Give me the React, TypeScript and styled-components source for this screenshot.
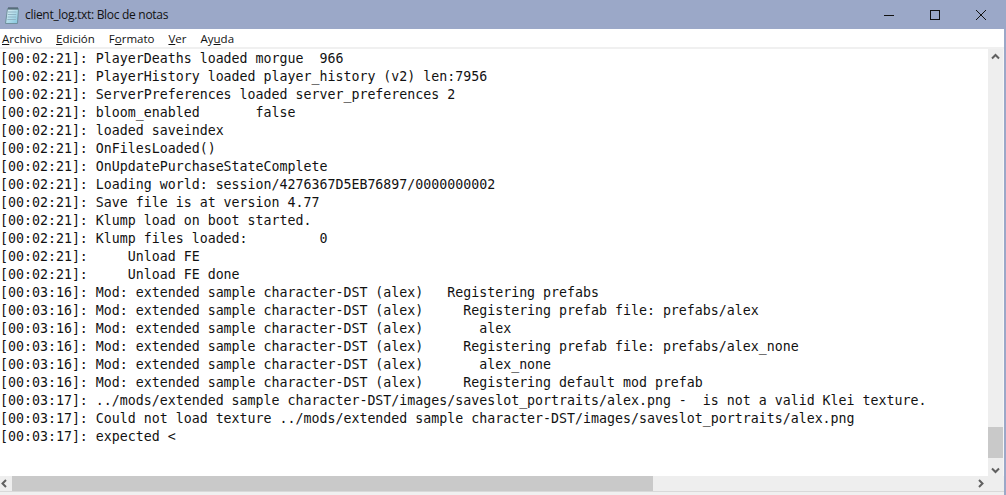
import { createGlobalStyle, styled } from "styled-components";

const Global = createGlobalStyle`
  html,
  body {
    margin: 0;
    padding: 0;
    height: 100%;
    overflow: hidden;
    background: #fff;
  }
`;

const Win = styled.div`
  width: 1006px;
  height: 495px;
  display: flex;
  flex-direction: column;
  background: #fff;
  border-right: 2px solid #9ba8c8;
  box-sizing: border-box;
  font-family: "Open Sans", "Noto Sans", sans-serif;
`;

const TitleBar = styled.div`
  height: 29px;
  flex: none;
  display: flex;
  align-items: center;
  background: #9ba8c8;
  padding-left: 4px;
`;

const TitleText = styled.span`
  margin-left: 5px;
  font-size: 12px;
  letter-spacing: -0.3px;
  color: #111;
  flex: 1;
`;

const WinBtn = styled.div`
  width: 46px;
  height: 29px;
  display: flex;
  align-items: center;
  justify-content: center;
`;

const MenuBar = styled.div`
  height: 18px;
  flex: none;
  display: flex;
  align-items: center;
  gap: 14px;
  padding-left: 2px;
  font-size: 11.5px;
  color: #111;
  border-bottom: 2px solid #f0f0f0;
`;

const Key = styled.span`
  text-decoration: underline;
  text-underline-offset: 1px;
`;

const Body = styled.div`
  flex: 1;
  min-height: 0;
  display: grid;
  grid-template-columns: 1fr 16px;
  grid-template-rows: 1fr 15px;
`;

const Log = styled.pre`
  margin: 0;
  padding-top: 1px;
  overflow: hidden;
  font-family: "DejaVu Sans Mono", "Liberation Mono", monospace;
  font-size: 13.28px;
  line-height: 18px;
  color: #111;
`;

const VBar = styled.div`
  background: #eeeeee;
  border-right: 1px solid #f6f6f6;
  display: flex;
  flex-direction: column;
  align-items: center;
  justify-content: space-between;
  padding: 3px 0 1px;
  position: relative;
`;

const Thumb = styled.div`
  position: absolute;
  left: 0;
  right: 0;
  background: #c9c9c9;
`;

const HBar = styled.div`
  background: #eeeeee;
  display: flex;
  align-items: center;
  justify-content: space-between;
  padding: 0 3px 0 0;
  position: relative;
`;

const HThumb = styled.div`
  position: absolute;
  top: 0;
  bottom: 0;
  left: 12px;
  width: 641px;
  background: #c9c9c9;
`;

const Corner = styled.div`
  background: #eeeeee;
`;

const Bottom = styled.div`
  height: 4px;
  flex: none;
  background: #f0f0f0;
  border-top: 1px solid #d9d9d9;
  box-sizing: border-box;
`;

const lines = `[00:02:21]: PlayerDeaths loaded morgue  966
[00:02:21]: PlayerHistory loaded player_history (v2) len:7956
[00:02:21]: ServerPreferences loaded server_preferences 2
[00:02:21]: bloom_enabled       false
[00:02:21]: loaded saveindex
[00:02:21]: OnFilesLoaded()
[00:02:21]: OnUpdatePurchaseStateComplete
[00:02:21]: Loading world: session/4276367D5EB76897/0000000002
[00:02:21]: Save file is at version 4.77
[00:02:21]: Klump load on boot started.
[00:02:21]: Klump files loaded:         0
[00:02:21]:     Unload FE
[00:02:21]:     Unload FE done
[00:03:16]: Mod: extended sample character-DST (alex)   Registering prefabs
[00:03:16]: Mod: extended sample character-DST (alex)     Registering prefab file: prefabs/alex
[00:03:16]: Mod: extended sample character-DST (alex)       alex
[00:03:16]: Mod: extended sample character-DST (alex)     Registering prefab file: prefabs/alex_none
[00:03:16]: Mod: extended sample character-DST (alex)       alex_none
[00:03:16]: Mod: extended sample character-DST (alex)     Registering default mod prefab
[00:03:17]: ../mods/extended sample character-DST/images/saveslot_portraits/alex.png -  is not a valid Klei texture.
[00:03:17]: Could not load texture ../mods/extended sample character-DST/images/saveslot_portraits/alex.png
[00:03:17]: expected <`;

function Arrow({ d }: { d: string }) {
  return (
    <svg width="9" height="9" viewBox="0 0 9 9">
      <path d={d} fill="none" stroke="#606060" strokeWidth="2" />
    </svg>
  );
}

function NotepadIcon() {
  return (
    <svg width="16" height="18" viewBox="0 0 16 18">
      <defs>
        <linearGradient id="page" x1="0" y1="0" x2="1" y2="1">
          <stop offset="0" stopColor="#e6f5f8" />
          <stop offset="1" stopColor="#7fc4dc" />
        </linearGradient>
      </defs>
      <path d="M3.5 2.5h11l-1 15h-12z" fill="url(#page)" stroke="#6f8f9c" />
      <path d="M4 6h8.5M3.8 8.5h8.5M3.6 11h8.5M3.4 13.5h8.5" stroke="#8fb4c4" />
      <path d="M5 1v3M7 1v3M9 1v3M11 1v3M13 1v3" stroke="#3f4f5a" />
    </svg>
  );
}

export default function App() {
  return (
    <Win>
      <Global />
      <TitleBar>
        <NotepadIcon />
        <TitleText>client_log.txt: Bloc de notas</TitleText>
        <WinBtn>
          <svg width="10" height="10" viewBox="0 0 10 10">
            <path d="M0 5.5h10" stroke="#111" />
          </svg>
        </WinBtn>
        <WinBtn>
          <svg width="10" height="10" viewBox="0 0 10 10">
            <rect x="0.5" y="0.5" width="9" height="9" fill="none" stroke="#111" />
          </svg>
        </WinBtn>
        <WinBtn>
          <svg width="10" height="10" viewBox="0 0 10 10">
            <path d="M0 0l10 10M10 0L0 10" stroke="#111" />
          </svg>
        </WinBtn>
      </TitleBar>
      <MenuBar>
        <span>
          <Key>A</Key>rchivo
        </span>
        <span>
          <Key>E</Key>dición
        </span>
        <span>
          F<Key>o</Key>rmato
        </span>
        <span>
          <Key>V</Key>er
        </span>
        <span>
          Ay<Key>u</Key>da
        </span>
      </MenuBar>
      <Body>
        <Log>{lines}</Log>
        <VBar>
          <Arrow d="M1 6.5l3.5-3.5 3.5 3.5" />
          <Thumb style={{ top: 378, height: 31 }} />
          <Arrow d="M1 2.5l3.5 3.5 3.5-3.5" />
        </VBar>
        <HBar>
          <Arrow d="M6 1L2.5 4.5 6 8" />
          <HThumb />
          <Arrow d="M3 1l3.5 3.5L3 8" />
        </HBar>
        <Corner />
      </Body>
      <Bottom />
    </Win>
  );
}
